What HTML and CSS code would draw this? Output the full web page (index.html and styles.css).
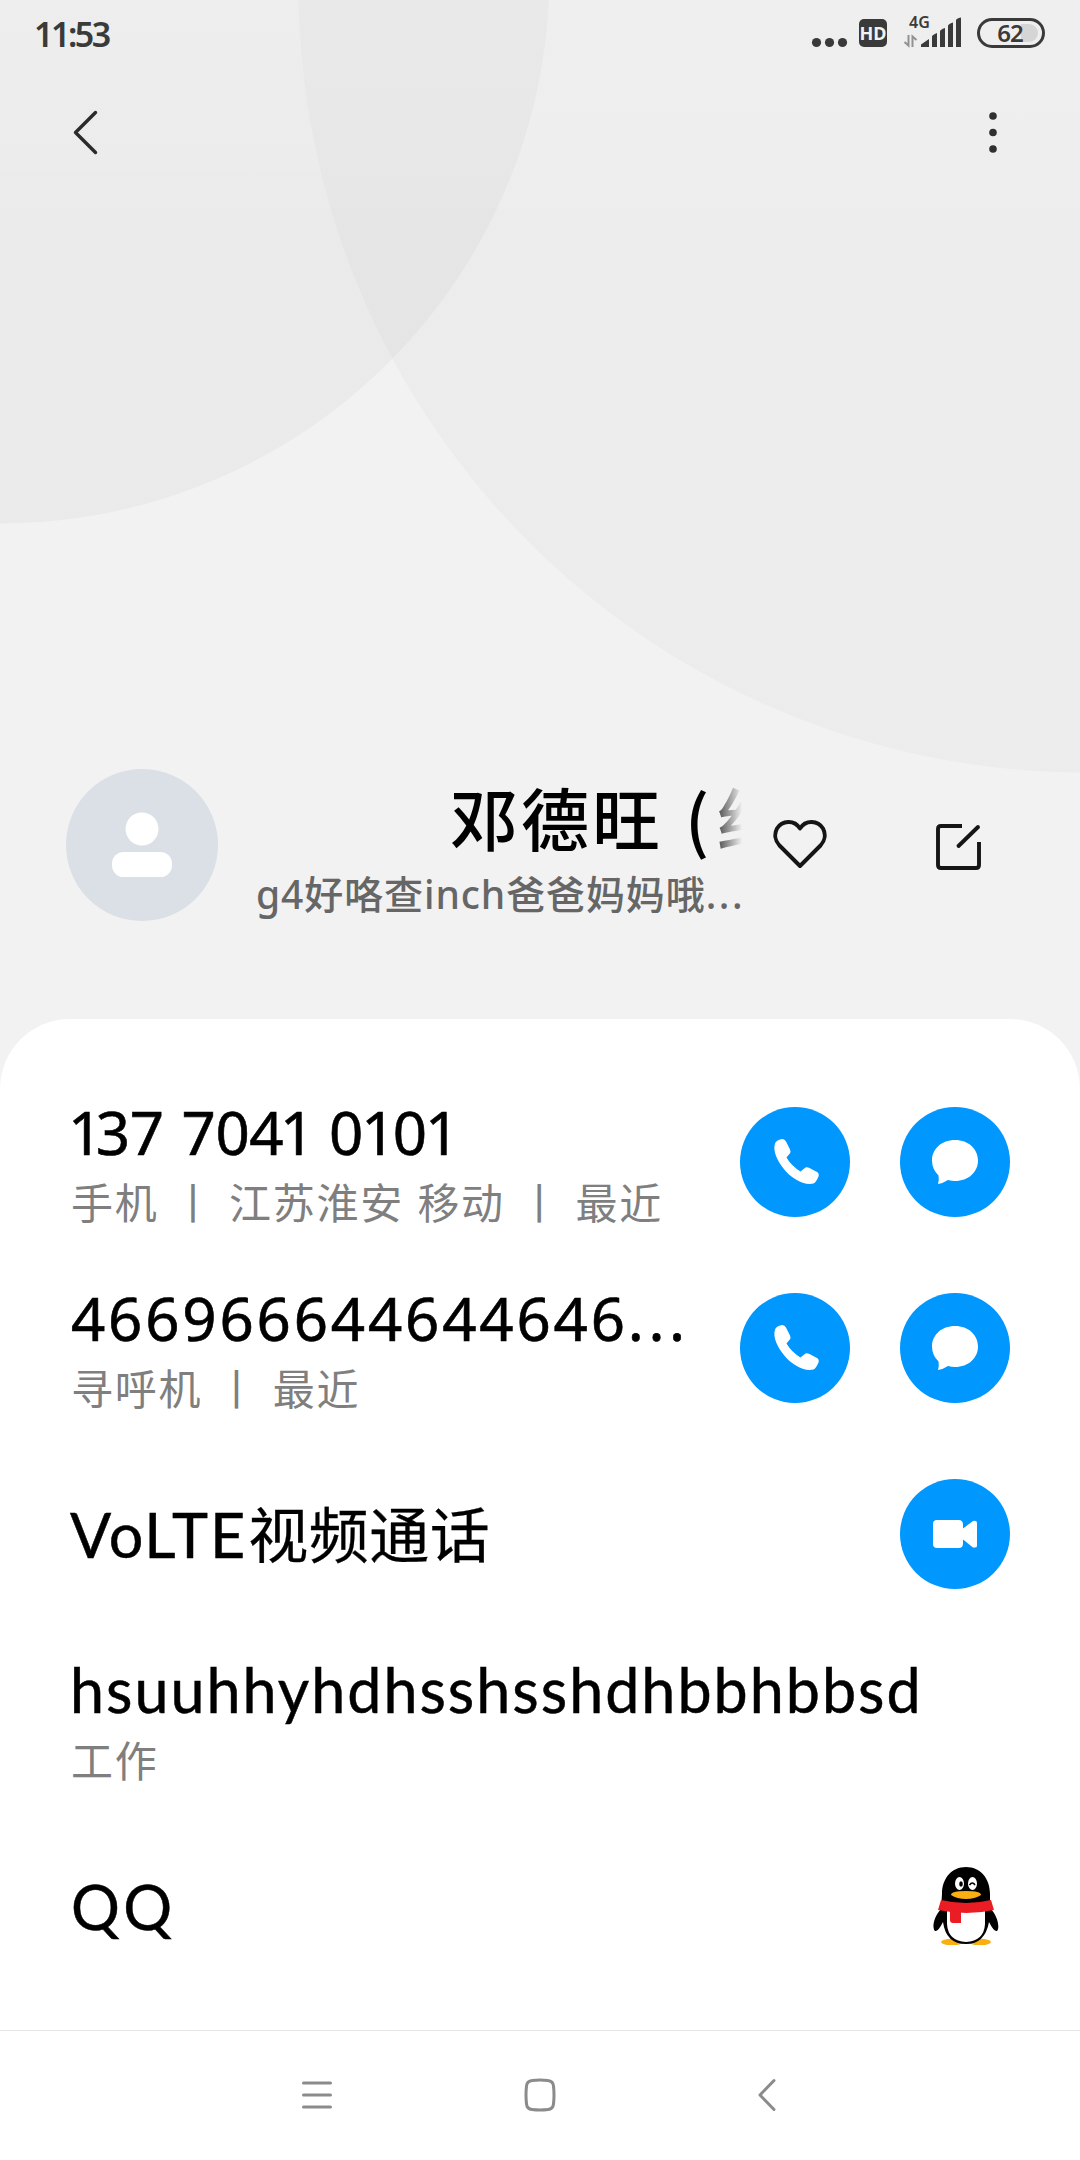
FILE: index.html
```html
<!DOCTYPE html>
<html lang="zh-CN">
<head>
<meta charset="utf-8">
<title>联系人</title>
<link rel="stylesheet" href="styles.css">
</head>
<body>
<svg class="defs" width="0" height="0">
  <symbol id="phone" viewBox="0 0 110 110"><path fill="#fff" d="M35 36.5Q36 33 42 32Q44.500 31.700 46 34.500L50 42.500Q51 45 50 46.300L46.500 50.500Q51.500 59 60.500 64.500L65.500 60.500Q67 59.800 69 60.700L77 65Q79.500 66.500 78.500 69.500Q76 75.500 73.500 76.500C64 79 50.500 71 43.500 61.500C37.500 54 32.500 44 35 36.500Z"/></symbol>
  <symbol id="chat" viewBox="0 0 110 110"><path fill="#fff" d="M55 33C68.500 33 78 42 78 53.500S68.500 74 55 74Q51.500 74 48 73Q43.500 76 38 77Q39.300 73 38.500 68.500Q32 62 32 53.500C32 42 41.500 33 55 33Z"/></symbol>
</svg>
<header class="status">
  <span class="clock">11:53</span>
  <svg class="indicators" width="240" height="60" viewBox="800 0 240 60">
    <g fill="#3a3a3a"><circle cx="816.500" cy="42.500" r="4.600"/><circle cx="829.500" cy="42.500" r="4.600"/><circle cx="842.500" cy="42.500" r="4.600"/>
    <rect x="859" y="19" width="28" height="28" rx="5"/>
    <path d="M921 47V44.500L929 39V47ZM932 47V36.500Q932 35 937 33V47ZM940 47V31.500Q940 29.500 945 28V47ZM948 47V26Q948 24 953 22.500V47ZM956 47V20.500Q956 18.500 961 17.500V47Z"/></g>
    <path d="M908.500 35V45.500L904.500 42M912.500 47V36.500L916.500 40" fill="none" stroke="#929292" stroke-width="2"/>
    <path d="M1021 24H1029A9 9 0 0 1 1029 42H1021Z" fill="#d5d5d5"/>
    <rect x="978.500" y="19.500" width="65" height="27" rx="13.500" fill="none" stroke="#3a3a3a" stroke-width="3"/>
    <text class="hd" x="873" y="40">HD</text>
    <text class="net" x="919.500" y="28">4G</text>
    <text class="level" x="1010" y="42">62</text>
  </svg>
</header>
<nav class="toolbar">
  <svg width="26" height="46" viewBox="0 0 26 46"><path d="M23.500 2.500L3.500 22.500L23.500 42.500" fill="none" stroke="#2b2b2b" stroke-width="3.400" stroke-linecap="round" stroke-linejoin="round"/></svg>
  <svg width="10" height="46" viewBox="0 0 10 46" fill="#303030"><circle cx="5" cy="6" r="3.800"/><circle cx="5" cy="22.500" r="3.800"/><circle cx="5" cy="39" r="3.800"/></svg>
</nav>
<section class="profile">
  <svg class="avatar" width="152" height="152" viewBox="0 0 152 152"><circle cx="76" cy="76" r="76" fill="#dbdfe6"/><circle cx="76" cy="60" r="16.500" fill="#fff"/><rect x="46" y="83" width="60" height="25" rx="11.500" fill="#fff"/></svg>
  <div class="identity">
    <div class="name">邓德旺<span class="paren">(</span>红</div>
    <div class="company">g4好咯查inch爸爸妈妈哦<span class="more">...</span></div>
  </div>
  <svg class="heart" width="54" height="50" viewBox="0 0 54 50"><path d="M27 47L6.500 26.500C2 21.500 1 15 4 9.500C9 1 21.500 0.500 27 9.500C32.500 0.500 45 1 50 9.500C53 15 52 21.500 47.500 26.500Z" fill="none" stroke="#151515" stroke-width="3.900" stroke-linejoin="round"/></svg>
  <svg class="edit" width="46" height="48" viewBox="0 0 46 48"><path d="M26 3H5Q2 3 2 6V42Q2 45 5 45H40Q43 45 43 42V19" fill="none" stroke="#151515" stroke-width="3.900"/><path d="M22.500 23L42 4" stroke="#151515" stroke-width="3.900" stroke-linecap="round"/></svg>
</section>
<main class="card">
  <div class="row">
    <div class="info">
      <div class="title phone-a"><i class="first">1</i>37 704<i>1</i> <span class="tail">0<i>1</i>0<i>1</i></span></div>
      <div class="note">手机 丨 江苏淮安 移动 丨 最近</div>
    </div>
    <svg class="button"><use href="#phone"/></svg>
    <svg class="button"><use href="#chat"/></svg>
  </div>
  <div class="row">
    <div class="info">
      <div class="title phone-b">466966644644646<span class="dots">...</span></div>
      <div class="note">寻呼机 丨 最近</div>
    </div>
    <svg class="button"><use href="#phone"/></svg>
    <svg class="button"><use href="#chat"/></svg>
  </div>
  <div class="row">
    <div class="info"><div class="title volte"><span class="latin">VoLTE</span>视频通话</div></div>
    <svg class="button" viewBox="0 0 110 110"><path fill="#fff" d="M37 41H58.500Q63 41 63 45.500V49.500L73 42Q77 41 77 44V67Q77 69 73 68.500L63 60.500V64.500Q63 69 58.500 69H37Q33 69 33 65V45Q33 41 37 41Z"/></svg>
  </div>
  <div class="row">
    <div class="info">
      <div class="title email">hsuuhhyhdhsshsshdhbbhbbsd</div>
      <div class="note">工作</div>
    </div>
  </div>
  <div class="row">
    <div class="info"><div class="title qq">QQ</div></div>
    <svg class="penguin" width="66" height="78" viewBox="0 0 66 78">
      <ellipse cx="19" cy="75" rx="11" ry="3.300" fill="#f9ae12"/><ellipse cx="47" cy="75" rx="11" ry="3.300" fill="#f9ae12"/>
      <path d="M8 42C0 51 -1 61 2 64Q5 65 10 55Q13 77 33 77Q52 77 56 55Q61 65 64 64C67 61 65 49 57 41V27C57 11 47 0 33 0S9 11 9 27Z" fill="#000"/>
      <path d="M14 43H52V57Q51 74 33 75Q15 74 14 57Z" fill="#fff"/>
      <path d="M8 33Q33 39 58 33L61 43Q34 49 5 43Z" fill="#ea1d24"/><path d="M17 43L28 45V56H20Q17 56 17 53Z" fill="#ea1d24"/>
      <path d="M18 28Q18 24 33 24T48 28Q42 32 33 32T18 28Z" fill="#f9ae12"/>
      <ellipse cx="26.500" cy="16.500" rx="4.500" ry="6.500" fill="#fff"/><ellipse cx="39.500" cy="16.500" rx="4.500" ry="6.500" fill="#fff"/><ellipse cx="28" cy="17" rx="1.800" ry="2.700"/><path d="M36.500 18Q39.500 14 42 18" fill="none" stroke="#000" stroke-width="1.500"/>
    </svg>
  </div>
</main>
<footer class="system-nav">
  <svg width="30" height="34" viewBox="0 0 30 34"><path d="M1.500 5H28.500M1.500 17H28.500M1.500 29H28.500" stroke="#8b8b8b" stroke-width="3" stroke-linecap="round"/></svg>
  <svg width="32" height="34" viewBox="0 0 32 34"><path d="M8 2.500Q16 1.500 24 2.500Q29 3 29.500 8Q30.500 17 29.500 26Q29 31 24 31.500Q16 32.500 8 31.500Q3 31 2.500 26Q1.500 17 2.500 8Q3 3 8 2.500Z" fill="none" stroke="#8b8b8b" stroke-width="3"/></svg>
  <svg width="18" height="34" viewBox="0 0 18 34"><path d="M16 2.500L2 17L16 31.500" fill="none" stroke="#8b8b8b" stroke-width="3" stroke-linecap="round" stroke-linejoin="round"/></svg>
</footer>
</body>
</html>
```
FILE: styles.css
```css
* { box-sizing: border-box; }
body {
  margin: 0;
  width: 1080px;
  height: 2160px;
  overflow: hidden;
  display: flex;
  flex-direction: column;
  font-family: "Noto Sans", "Noto Sans CJK SC", sans-serif;
  color: #000;
  background:
    linear-gradient(rgba(255,255,255,.15), rgba(255,255,255,.06)) 0 0 / 100% 208px no-repeat,
    radial-gradient(circle at 0 -26px, rgba(0,0,0,.030) 549px, transparent 550px),
    radial-gradient(circle at 1085px -14px, rgba(0,0,0,.023) 786px, transparent 787px),
    #f2f2f2;
}
svg { display: block; flex: none; }
.defs { width: 0; height: 0; }
.status { flex: none; display: flex; justify-content: space-between; height: 60px; padding: 0 40px 0 34px; }
.clock { font-size: 34px; font-weight: 600; line-height: 68px; color: #3a3a3a; letter-spacing: -2.500px; }
.indicators { overflow: visible; }
.indicators text { font-family: "Noto Sans", sans-serif; font-weight: 700; fill: #3a3a3a; text-anchor: middle; }
.indicators .hd { font-size: 18px; fill: #f2f2f2; }
.indicators .net { font-size: 16px; font-weight: 600; }
.indicators .level { font-size: 24px; font-weight: 600; letter-spacing: -1px; }
.toolbar { flex: none; display: flex; justify-content: space-between; height: 209px; padding: 50px 82px 0 72px; }
.profile { flex: none; display: flex; height: 750px; padding: 500px 98px 0 66px; }
.identity { width: 486px; margin-left: 38px; overflow: hidden; }
.name {
  height: 97px; padding-left: 194px; white-space: nowrap;
  font-family: "Noto Sans CJK SC", sans-serif; font-weight: 500; font-size: 68px; line-height: 96px; letter-spacing: 3px;
  -webkit-mask-image: linear-gradient(90deg, #000 450px, transparent 486px);
  mask-image: linear-gradient(90deg, #000 450px, transparent 486px);
}
.paren { margin: 0 5px 0 22px; }
.company { font-size: 39px; line-height: 56px; letter-spacing: .9px; font-weight: 500; color: #666; white-space: nowrap; }
.more { letter-spacing: 2.500px; }
.heart { margin: 50px 0 0 31px; }
.edit { margin: 54px 0 0 auto; }
.card { flex: 1; padding: 50px 70px 0; background: #fff; border-radius: 70px 70px 0 0; }
.row { display: flex; align-items: center; height: 186px; gap: 50px; }
.info { flex: 1; min-width: 0; white-space: nowrap; }
.title { padding-top: 1px; font-size: 60px; line-height: 76px; }
.title i { font-style: normal; margin: 0 -4px 0 -3px; }
.title .first { margin: 0 -6px 0 -2px; }
.phone-a { word-spacing: 3px; letter-spacing: -.5px; -webkit-text-stroke: .6px #000; }
.tail { margin-left: 1px; letter-spacing: 1px; }
.phone-b { padding-left: 1px; letter-spacing: 2.800px; -webkit-text-stroke: .6px #000; }
.dots { letter-spacing: 4.500px; }
.note { padding: 1px 0 0 1px; font-family: "Noto Sans CJK SC", sans-serif; font-size: 42px; line-height: 60px; letter-spacing: 1.700px; word-spacing: 2.400px; color: #7f7f7f; }
.email, .qq, .latin { font-family: Lato, "Noto Sans", sans-serif; font-size: 61px; letter-spacing: 2px; -webkit-text-stroke: .5px #000; }
.qq { padding-left: 1px; letter-spacing: 3.500px; }
.volte { letter-spacing: .5px; -webkit-text-stroke: .3px #000; }
.latin { margin-right: 1px; }
.button { width: 110px; height: 110px; border-radius: 50%; background: #0097ff; }
.penguin { margin-right: 11px; }
.system-nav { flex: none; display: grid; grid-template-columns: 30px 32px 18px; column-gap: 192px; height: 130px; padding: 47px 0 0 302px; border-top: 1.500px solid #e5e5e5; background: #fff; }
.system-nav svg:last-child { margin-left: 10px; }
```
